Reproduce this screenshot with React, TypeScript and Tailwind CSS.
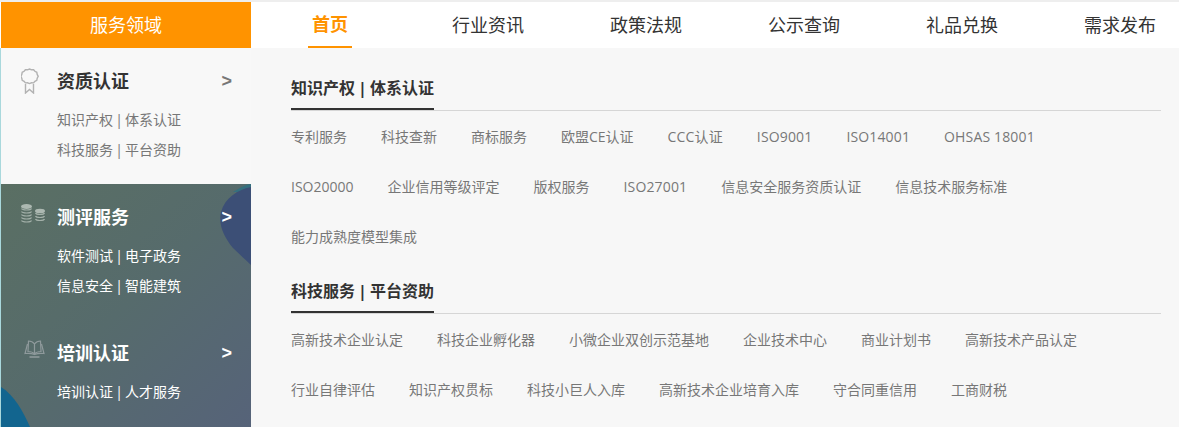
const navItems = ["首页", "行业资讯", "政策法规", "公示查询", "礼品兑换", "需求发布"];

const row1 = [
  ["专利服务", "科技查新", "商标服务", "欧盟CE认证", "CCC认证", "ISO9001", "ISO14001", "OHSAS 18001"],
  ["ISO20000", "企业信用等级评定", "版权服务", "ISO27001", "信息安全服务资质认证", "信息技术服务标准"],
  ["能力成熟度模型集成"],
];

const row2 = [
  ["高新技术企业认定", "科技企业孵化器", "小微企业双创示范基地", "企业技术中心", "商业计划书", "高新技术产品认定"],
  ["行业自律评估", "知识产权贯标", "科技小巨人入库", "高新技术企业培育入库", "守合同重信用", "工商财税"],
];

// latin labels run a touch wider in the picture than in Open Sans
const wideLabels = ["CCC认证", "ISO9001", "ISO14001", "OHSAS 18001", "ISO27001"];

function RibbonIcon() {
  return (
    <svg width="18" height="26" viewBox="0 0 18 26" fill="none" stroke="#b2b2b2" strokeWidth="1.4">
      <path d="M8.500 1l2 .8 2.100-.1 1.300 1.600 1.900 1 .4 2.100 1 1.900-1 1.900-.4 2.100-1.900 1-1.300 1.600-2.100-.1-2 .8-2-.8-2.100.1-1.300-1.600-1.900-1-.4-2.100-1-1.900 1-1.900.4-2.100 1.900-1 1.300-1.600 2.100.1z" />
      <path d="M4.500 16v9l4-3.500 4 3.500v-9" />
    </svg>
  );
}

function CoinsIcon() {
  return (
    <svg width="25" height="20" viewBox="0 0 25 20" fill="none" stroke="#a3b0a9" strokeWidth="1.2">
      <ellipse cx="5.500" cy="2.500" rx="5.500" ry="2.500" fill="#acb8b1" stroke="none" />
      <path d="M.5 4.500c.8 2 9.200 2 10 0M.5 7.500c.8 2 9.200 2 10 0M.5 10.500c.8 2 9.200 2 10 0M.5 13.500c.8 2 9.200 2 10 0M.5 16.500c.8 2 9.200 2 10 0" />
      <ellipse cx="19" cy="7" rx="5" ry="2.300" fill="#acb8b1" stroke="none" />
      <path d="M14.500 9c.8 2 8.200 2 9 0M14.500 12c.8 2 8.200 2 9 0M14.500 15c.8 2 8.200 2 9 0" />
    </svg>
  );
}

function BookIcon() {
  return (
    <svg width="21" height="18" viewBox="0 0 21 18" fill="none" stroke="#8f9a9c" strokeWidth="1.2">
      <path d="M10.500 4C9 2 7 1 4.500 1L4 11.500c2.500 0 5 .8 6.500 2.500 1.500-1.700 4-2.500 6.500-2.500L16.500 1C14 1 12 2 10.500 4zV14" />
      <path d="M3.500 4L1 13.500c3.500-.5 7 0 9.500 1 2.500-1 6-1.500 9.500-1L17.500 4" />
      <path d="M5.500 17h10" strokeWidth="1.600" />
    </svg>
  );
}

function SideBlock({
  icon,
  title,
  lines,
  dark,
}: {
  icon: React.ReactNode;
  title: string;
  lines: string[][];
  dark?: boolean;
}) {
  return (
    <div className={`relative h-[136px] pt-5 ${dark ? "text-white" : "text-[#777]"}`}>
      <div className="flex h-[26px] items-center pr-[19px]">
        <div className="flex h-[26px] w-[56px] shrink-0 justify-start pl-5">{icon}</div>
        <div className={`flex-1 text-lg leading-[26px] font-bold ${dark ? "text-white" : "text-[#333]"}`}>{title}</div>
        <span className={`font-['Liberation_Sans'] text-lg font-bold ${dark ? "text-white" : "text-[#777]"}`}>&gt;</span>
      </div>
      <div className="mt-[11px] pl-[56px]">
        {lines.map((l) => (
          <div key={l[0]} className="flex h-[30px] text-sm leading-[30px] whitespace-nowrap">
            {l[0]}
            <span className="w-3 text-center">|</span>
            {l[1]}
          </div>
        ))}
      </div>
    </div>
  );
}

function LinkSection({ left, right, rows }: { left: string; right: string; rows: string[][] }) {
  return (
    <div>
      <div className="flex border-b border-[#d6d6d6]">
        <div className="flex border-b-2 border-[#333] pb-2 text-base leading-6 font-bold text-[#333]">
          {left}
          <span className="w-[15px] text-center">|</span>
          {right}
        </div>
      </div>
      <div className="mt-px">
        {rows.map((r) => (
          <div key={r[0]} className="flex h-[50px] items-center gap-[34px] text-sm whitespace-nowrap text-[#777]">
            {r.map((t) => (
              <span key={t} className={wideLabels.includes(t) ? "tracking-[0.15px]" : ""}>
                {t}
              </span>
            ))}
          </div>
        ))}
      </div>
    </div>
  );
}

export default function App() {
  return (
    <div className="h-[427px] w-[1179px] overflow-hidden bg-[#f7f7f7] font-['Open_Sans','Noto_Sans_CJK_SC',sans-serif]">
      <div className="h-0.5 bg-[#eeeeee]" />
      <div className="flex h-[46px] bg-white">
        <div className="ml-px flex w-[250px] shrink-0 items-center justify-center bg-[#ff9300] text-lg text-white">
          服务领域
        </div>
        <div className="flex">
          {navItems.map((item, i) => (
            <div key={item} className="flex w-[158px] shrink-0 justify-center">
              <div
                className={`flex h-[46px] w-[44px] items-center justify-center whitespace-nowrap text-lg ${
                  i === 0 ? "border-b-2 border-[#ff9300] font-bold text-[#ff9300]" : "text-[#333]"
                }`}
              >
                {item}
              </div>
            </div>
          ))}
        </div>
      </div>
      <div className="flex h-[379px]">
        <div className="w-[251px] shrink-0 border-l border-[#a9d8dc]">
          <div className="h-[136px] bg-[#f8f8f8]">
            <SideBlock
              icon={<RibbonIcon />}
              title="资质认证"
              lines={[
                ["知识产权", "体系认证"],
                ["科技服务", "平台资助"],
              ]}
            />
          </div>
          <div className="relative h-[243px] overflow-hidden bg-gradient-to-br from-[#5a6f63] via-[#566b6c] to-[#566379]">
            <svg className="absolute top-0 left-0" width="250" height="243" viewBox="0 0 250 243">
              <path d="M232 8C240 3 246 0 250 0V8z" fill="#35707f" />
              <path d="M250 3C236 6 224 14 220 28c-3 14 4 26 12 36 6 6 13 12 18 17z" fill="#3c4f76" />
              <path d="M0 203c13 8 22 24 29 40H0z" fill="#12658f" />
            </svg>
            <SideBlock
              dark
              icon={<CoinsIcon />}
              title="测评服务"
              lines={[
                ["软件测试", "电子政务"],
                ["信息安全", "智能建筑"],
              ]}
            />
            <SideBlock
              dark
              icon={
                <div className="ml-[3px]">
                  <BookIcon />
                </div>
              }
              title="培训认证"
              lines={[["培训认证", "人才服务"]]}
            />
          </div>
        </div>
        <div className="flex-1 pt-[28px] pr-[18px] pl-10">
          <LinkSection left="知识产权" right="体系认证" rows={row1} />
          <div className="mt-[17px]">
            <LinkSection left="科技服务" right="平台资助" rows={row2} />
          </div>
        </div>
      </div>
    </div>
  );
}
